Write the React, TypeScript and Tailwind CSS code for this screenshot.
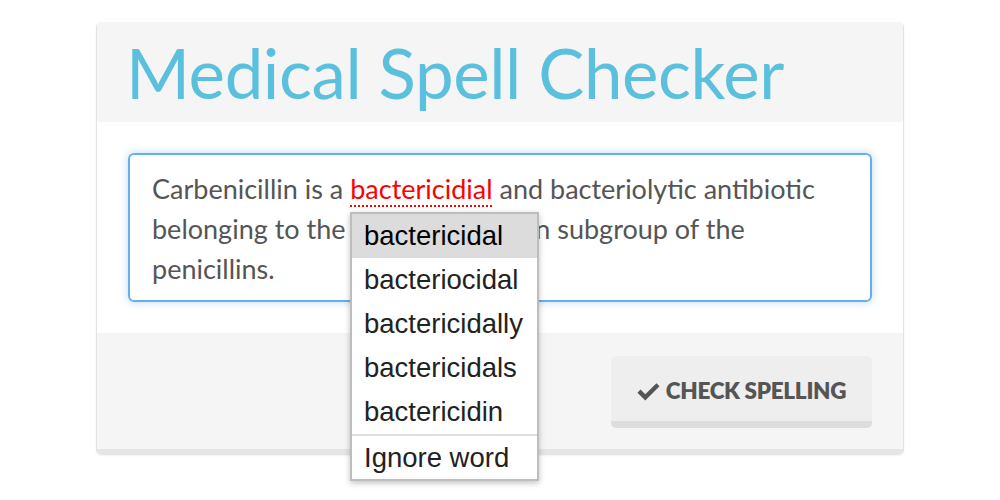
const suggestions = ["bactericidal", "bacteriocidal", "bactericidally", "bactericidals", "bactericidin"]

function CheckIcon() {
    return (
        <svg viewBox="0 0 24 20" className="w-[23px] h-[19px]" fill="#555">
            <path d="M8.6 19.4 0.4 11.2 3.6 8 8.6 13 20.4 1.2 23.6 4.4Z" />
        </svg>
    )
}

export default function App() {
    return (
        <main className="w-full h-[500px] bg-white overflow-hidden pt-[22px]" style={{ fontFamily: "Lato, 'Open Sans', sans-serif" }}>
            <div className="relative mx-auto w-[808px] rounded-[5px] border-x border-[#e3e3e3] shadow-[0_1px_2px_rgba(0,0,0,0.05)]">
                <div className="h-[100px] bg-[#f5f5f5] rounded-t-[5px] pl-[29px] flex items-center">
                    <h1 className="text-[69px] leading-none text-[#5bc0de] font-normal tracking-[-0.4px]">Medical Spell Checker</h1>
                </div>

                <div className="bg-white px-[31px] py-[31px]">
                    <div className="relative h-[149px] rounded-[6px] border-2 border-[#66afe9] shadow-[0_0_8px_rgba(102,175,233,0.45)] pl-[22px] pt-[14px] text-[27px] leading-[40px] text-[#555] whitespace-nowrap">
                        Carbenicillin is a{" "}
                        <span className="text-[#ff0000] underline decoration-dotted decoration-[#ff0000] decoration-2 underline-offset-[6px]">bactericidial</span>{" "}
                        and bacteriolytic antibiotic
                        <br />
                        belonging to the carboxypenicillin subgroup of the
                        <br />
                        penicillins.
                    </div>
                </div>

                <div className="bg-[#f5f5f5] border-b-[6px] border-[#e5e5e5] rounded-b-[5px] pt-[23px] pb-[21px] pr-[31px] flex justify-end">
                    <button className="w-[261px] h-[72px] rounded-[5px] bg-[#eeeeee] border-b-[7px] border-[#dddddd] flex items-center justify-center gap-[6px] pt-[5px] text-[22.5px] font-extrabold text-[#555] tracking-[-0.3px]">
                        <CheckIcon />
                        <span>CHECK SPELLING</span>
                    </button>
                </div>

                <div className="absolute left-[253px] top-[190px] w-[189px] bg-white border-2 border-[#bdbdbd] shadow-[0_2px_6px_rgba(0,0,0,0.25)] text-[27.5px] text-[#222]" style={{ fontFamily: "'Liberation Sans', Arial, sans-serif" }}>
                    {suggestions.map((s, i) => (
                        <div key={s} className={`h-[44px] pl-[12px] flex items-center ${i === 0 ? "bg-[#dcdcdc] text-black" : ""}`}>{s}</div>
                    ))}
                    <div className="border-t-2 border-[#dedede] h-[45px] pl-[12px] flex items-center">Ignore word</div>
                </div>
            </div>
        </main>
    )
}
